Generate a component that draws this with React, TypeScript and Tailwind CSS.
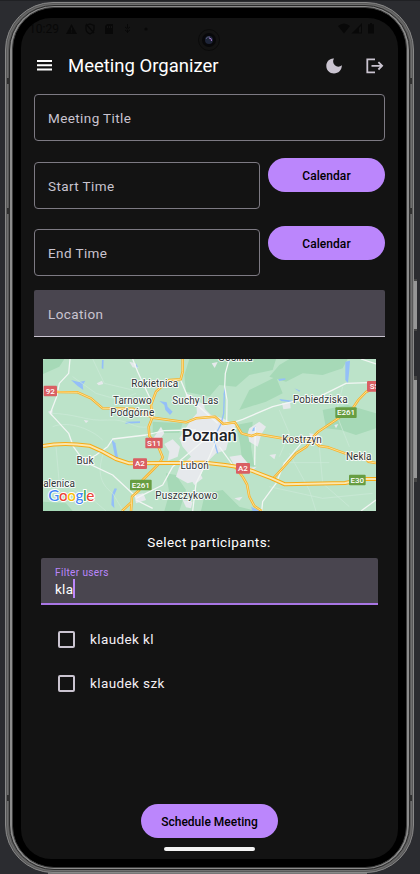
import React from "react";

const motorway = "M21 288 C60 280 110 280 160 287 L200 305 L240 327 L280 340 L507 338 L567 345 L602 350 L647 362 L707 385 L747 403 L927 399 L987 387 L1020 387";
const mainRoads = [
  "M45 124 L68 126 L125 127 L165 145 L200 175 L290 176 L350 203 L400 210 L450 217 L480 205 L537 200 L562 222 L597 217 L617 250 L647 258 L662 252 L737 265 L825 268 L850 288 L877 292 L927 310 L985 322 L997 335 L1020 339",
  "M440 27 L440 65 L434 88 L400 90 L360 125 L345 165 L350 200 L338 230 L340 258 L367 290 L380 322 L370 340 L350 360 L320 390 L310 420 L288 440 L285 483",
  "M285 458 L258 483",
  "M1020 112 L990 126 L967 150 L950 175 L907 205 L847 245 L830 262 L812 290 L780 310 L762 330 L735 360 L707 390",
  "M597 350 L620 380 L633 403 L640 440 L655 468 L677 483",
];
const minorRoads = [
  "M102 27 L98 70 L70 100 L62 140 L43 190 L98 250 L112 290 L145 335 L230 375 L300 440",
  "M145 335 L180 315 L215 290 L230 267 L330 255 L385 242 L480 240",
  "M290 27 L305 65 L340 140 L350 180",
  "M580 27 L568 70 L566 110 L573 150 L572 222",
  "M560 228 L620 208 L710 170 L770 155 L850 140 L930 100 L1020 97",
  "M658 230 L656 345",
  "M300 445 L380 405 L410 350 L470 300 L540 240",
  "M677 483 L680 455 L720 400 L745 340 L800 275 L840 260",
  "M434 90 L455 140 L500 180 L545 220",
  "M470 483 L480 400 L520 320 L550 250",
  "M300 450 L350 475",
  "M975 483 L1020 450",
  "M975 27 L1020 42",
  "M550 290 L590 345",
];
const trails = [
  "M40 190 C120 190 150 215 215 210 S290 240 340 230",
  "M110 80 L180 130 L250 150 L300 130",
  "M210 290 C180 360 190 400 230 430 L260 480",
  "M60 290 L70 400 L160 440 L210 483",
  "M760 310 L820 420 L840 483",
  "M700 410 L860 445 L1010 430",
  "M730 180 L760 250 L730 320",
  "M740 338 L880 338",
  "M850 290 L860 400 L940 470",
  "M920 110 L900 190 L940 290",
  "M170 27 L205 100 L290 120",
  "M50 230 C100 210 170 240 200 270",
];
const forests = [
  "M460 27 H720 L710 60 L640 75 L600 110 L550 105 L520 140 L450 125 L445 75 Z",
  "M760 27 H935 L920 55 L860 75 L800 70 L750 95 L700 80 L730 45 Z",
  "M860 180 L935 165 L1020 190 V235 L960 255 L915 240 L870 235 Z",
  "M600 225 L650 215 L645 290 L655 350 L620 345 L612 280 Z",
  "M350 215 L440 220 L430 248 L350 250 Z",
  "M507 430 L560 420 L610 470 L660 483 H495 Z",
  "M30 27 L85 27 L70 50 L21 72 V30 Z",
  "M640 120 L720 80 L740 130 L690 155 L610 180 Z",
  "M21 455 L90 460 L110 483 H21 Z",
  "M390 370 L420 375 L450 420 L430 483 H385 L400 430 Z",
];
const towns = [
  "M465 210 L500 170 L525 195 L560 205 L600 225 L580 262 L570 300 L540 310 L505 345 L490 390 L455 400 L420 380 L430 350 L465 320 L440 290 L430 265 Z",
  "M385 282 L410 268 L432 290 L425 320 L395 332 L400 305 Z",
  "M640 235 L670 215 L690 230 L675 255 L665 290 L640 275 L635 250 Z",
  "M580 320 L615 315 L640 345 L645 358 L600 355 Z",
  "M435 340 L470 330 L500 385 L475 405 Z",
  "M450 130 L472 140 L470 155 L448 150 Z",
  "M480 150 L505 165 L510 230 L485 220 Z",
  "M738 160 L762 156 L764 175 L742 178 Z",
  "M700 315 L720 312 L715 328 Z",
  "M280 35 L298 40 L308 55 L290 52 Z",
  "M182 100 L198 92 L202 102 L188 106 Z",
  "M143 210 L158 212 L150 219 Z",
  "M36 185 L50 180 L48 198 Z",
  "M130 325 L160 320 L158 348 L138 345 Z",
  "M295 435 L322 430 L330 450 L300 460 Z",
  "M350 268 L375 230 L385 250 L370 270 Z",
  "M527 40 L545 36 L536 54 Z",
  "M625 358 L662 350 L650 362 Z",
  "M595 445 L620 440 L610 452 Z",
  "M895 225 L907 222 L900 235 Z",
  "M820 250 L850 255 L855 285 L825 280 Z",
  "M440 450 L470 455 L465 475 L450 472 Z",
];
const lakes = [
  "M105 90 L128 96 L148 92 L140 105 L142 120 L125 108 Z",
  "M370 153 L392 157 L395 170 L410 185 L402 195 L388 180 L385 165 Z",
  "M226 266 L238 280 L246 322 L238 325 Z",
  "M928 35 L942 32 L940 60 L936 100 L928 90 Z",
  "M270 215 L312 214 V219 L268 221 Z",
  "M198 30 H203 L202 57 L197 55 Z",
  "M228 432 L236 415 L243 416 L233 440 L235 475 L226 465 Z",
  "M651 235 L659 229 L658 242 L648 244 Z",
  "M565 105 L568 128 L563 135 Z",
  "M727 87 L748 85 L748 89 L730 93 Z",
  "M730 147 L770 152 L768 157 L735 153 Z",
  "M645 470 L660 477 L672 483 H650 Z",
  "M300 40 L306 52 L301 54 Z",
  "M475 420 L487 435 L484 438 Z",
  "M775 115 L793 122 L790 125 Z",
];

const places: [string, number, number, number][] = [
  ["Rokietnica", 356, 110, 141],
  ["Tarnowo", 289, 162, 116],
  ["Podgórne", 289, 198, 132],
  ["Suchy Las", 478, 162, 138],
  ["Pobiedziska", 853, 158, 164],
  ["Kostrzyn", 798, 278, 119],
  ["Nekla", 968, 329, 76],
  ["Buk", 147, 342, 51],
  ["Luboń", 476, 357, 85],
  ["Puszczykowo", 451, 446, 186],
  ["alenica", 69, 412, 95],
  ["Goślina", 598, 33, 104],
];
const shields: [string, number, number, number, string][] = [
  ["92", 23, 107, 40, "#d95f63"],
  ["S11", 328, 263, 52, "#d95f63"],
  ["A2", 291, 325, 42, "#d95f63"],
  ["A2", 600, 339, 42, "#d95f63"],
  ["S5", 993, 93, 44, "#d95f63"],
  ["E261", 282, 389, 65, "#679d42"],
  ["E261", 898, 172, 64, "#679d42"],
  ["E30", 939, 374, 50, "#679d42"],
];

function PoznanMap() {
  return (
    <svg viewBox="21 27 999 456" className="block h-[152px] w-[333px]" fontFamily="Roboto, sans-serif">
      <rect x="21" y="27" width="999" height="456" fill="#bce3c9" />
      {forests.map((d) => <path key={d} d={d} fill="#a6d9b7" />)}
      {towns.map((d) => <path key={d} d={d} fill="#e6e9ec" />)}
      {lakes.map((d) => <path key={d} d={d} fill="#94bff8" />)}
      <path d="M545 310 L535 275 L543 245 L555 222 L563 190 L565 130" fill="none" stroke="#94bff8" strokeWidth="4" />
      <g fill="none" strokeLinejoin="round">
        {trails.map((d) => <path key={d} d={d} stroke="#cdeada" strokeWidth="2" />)}
        {minorRoads.map((d) => <path key={d} d={d} stroke="#f2f6f4" strokeWidth="3.8" />)}
        {mainRoads.map((d) => <path key={d} d={d} stroke="#f7b32a" strokeWidth="7.5" />)}
        {mainRoads.map((d) => <path key={d} d={d} stroke="#fde5a2" strokeWidth="2.5" />)}
        <path d={motorway} stroke="#f6ab16" strokeWidth="12" />
        <path d={motorway} stroke="#fce7ad" strokeWidth="6" />
      </g>
      {places.map(([name, x, y, w]) => (
        <text key={name} x={x} y={y} textLength={w} textAnchor="middle" fontSize="30" fill="#303437" stroke="#fff" strokeOpacity=".85" strokeWidth="6" strokeLinejoin="round" paintOrder="stroke">{name}</text>
      ))}
      <text x="520" y="273" textLength="165" textAnchor="middle" fontSize="50" fontWeight="500" fill="#202326" stroke="#fff" strokeOpacity=".85" strokeWidth="7" strokeLinejoin="round" paintOrder="stroke">Poznań</text>
      {shields.map(([name, x, y, w, fill]) => (
        <g key={name + x}>
          <rect x={x} y={y} width={w} height="32" rx="3" fill={fill} />
          <text x={x + w / 2} y={y + 24} textAnchor="middle" fontSize="24" fontWeight="500" fill="#fff">{name}</text>
        </g>
      ))}
      <text x="37" y="454" textLength="138" fontFamily="Lato, sans-serif" fontSize="46" fontWeight="500" strokeWidth="6" stroke="#fff" paintOrder="stroke">
        <tspan fill="#4285f4">G</tspan><tspan fill="#ea4335">o</tspan><tspan fill="#fbbc05">o</tspan><tspan fill="#4285f4">g</tspan><tspan fill="#34a853">l</tspan><tspan fill="#ea4335">e</tspan>
      </text>
    </svg>
  );
}

function OutlinedField({ label, wide }: { label: string; wide?: boolean }) {
  return (
    <div className={`${wide ? "w-[351px]" : "w-[226px]"} flex h-[47px] shrink-0 items-center rounded-[4px] border border-[#7d7a83] pl-[13px] pt-[2px] text-[13.5px] tracking-[0.4px] text-[#cac4d0]`}>
      {label}
    </div>
  );
}

function CalendarButton() {
  return <button className="h-[34px] w-[117px] rounded-full bg-[#bb86fc] pt-[1px] text-[12px] font-medium tracking-[0.05px] text-black">Calendar</button>;
}

function UserRow({ name }: { name: string }) {
  return (
    <label className="flex h-[44px] items-center pl-[37px] text-[13.5px] tracking-[0.4px] text-[#f4f0f5]">
      <span className="mr-[15px] size-[17px] rounded-[2px] border-2 border-[#cac4d0]" />
      <span>{name}</span>
    </label>
  );
}

function StatusBar() {
  return (
    <div className="flex h-[21px] shrink-0 items-center pl-[8px] text-[#080808]">
      <span className="w-[36px] text-[12px] leading-none">10:29</span>
      <svg className="ml-[1px] h-[12px] w-[84px]" viewBox="0 0 84 12" fill="currentColor">
        <path fillRule="evenodd" d="M5.5 1 L11 11 H0Z M5 4.5 h1 v3 h-1z M5 8.5 h1 v1 h-1z" />
        <path d="M24 1 L28 2.5 V6 C28 8 26.5 10 24 11 C21.5 10 20 8 20 6 V2.5Z M20 1 L28 10" fill="none" stroke="currentColor" strokeWidth="1.3" />
        <path fillRule="evenodd" d="M41 1 H47 V11 H39 V3Z M41 3 v2 h1 v-2z M43 3 v2 h1 v-2z M45 3 v2 h1 v-2z" />
        <path d="M61.5 1 V5 M59 4 L61.5 6 L64 4 M59 7 L61.5 9 L64 7 M61.5 7 V10" fill="none" stroke="currentColor" />
        <circle cx="80" cy="6" r="1.6" />
      </svg>
      <svg className="ml-auto mr-[23px] h-[11px] w-[37px]" viewBox="0 0 37 11" fill="currentColor">
        <path d="M0 3 Q6 -2 12 3 L6 10.5Z" />
        <path fillRule="evenodd" d="M24 0 V10.5 H13.5Z M21 5 V9.5 H23 V3Z" />
        <path d="M30 1.2 h2 V0 h2 v1.2 h2 V10.5 h-6z" />
      </svg>
    </div>
  );
}

function AppBar() {
  return (
    <header className="flex h-[54px] shrink-0 items-center pb-[1px] pl-[16px] pr-[14px]">
      <svg className="h-[11px] w-[15px]" viewBox="0 0 15 11" fill="#fff">
        <path d="M0 0h15v2H0zM0 4.2h15v2H0zM0 8.5h15v2H0z" />
      </svg>
      <h1 className="ml-[16px] pt-[1px] text-[18.5px] leading-6 text-white">Meeting Organizer</h1>
      <svg className="ml-auto h-[16px] w-[17px]" viewBox="0 0 17 16">
        <path d="M7.2 .5 C3 .8 .3 4 .3 8 C.3 12.3 3.7 15.5 8 15.5 C12.4 15.5 15.7 12.3 15.9 7.3 C13.7 9.2 10.7 9 8.9 7.3 C7 5.5 6.5 2.7 8 .5Z" fill="#cac4d0" />
      </svg>
      <svg className="ml-[23px] h-[16px] w-[18px]" viewBox="0 0 18 16" fill="none" stroke="#cac4d0" strokeWidth="1.8">
        <path d="M9 1.3 H1.3 V14.3 H9 M5.5 7.8 H16 M12.4 4.1 L16.1 7.8 L12.4 11.5" />
      </svg>
    </header>
  );
}

export default function App() {
  return (
    <div className="relative h-[874px] w-[420px] overflow-hidden bg-[#2b2c30] px-[5px] pt-[2px] font-['Roboto',sans-serif]">
      <div className="absolute left-0 top-0 h-[1px] w-full bg-[#202124]" />
      <div className="absolute bottom-0 left-[48px] h-[2px] w-[319px] bg-[#777]" />
      <div className="absolute left-[413px] top-[279px] h-[52px] w-[4px] border-b-2 border-t-2 border-[#444] bg-[#969696]" />
      <div className="absolute left-[413px] top-[376px] h-[106px] w-[4px] border-b-4 border-t-4 border-[#444] bg-[#969696]" />
      <div className="relative h-[871px] w-[409px] rounded-[48px] border border-[#898989] bg-[#595959] p-[1px]">
        <div className="absolute left-[1px] top-[75px] h-[6px] w-[3px] bg-[#303030]" />
        <div className="absolute right-[1px] top-[75px] h-[6px] w-[3px] bg-[#303030]" />
        <div className="absolute left-[1px] top-[205px] h-[6px] w-[3px] bg-[#303030]" />
        <div className="absolute right-[1px] top-[205px] h-[6px] w-[3px] bg-[#303030]" />
        <div className="absolute left-[1px] top-[792px] h-[6px] w-[3px] bg-[#303030]" />
        <div className="absolute right-[1px] top-[792px] h-[6px] w-[3px] bg-[#303030]" />
        <div className="h-full rounded-[46px] border border-[#6f6f6f] px-[1px]">
          <div className="h-full rounded-[45px] border border-[#2b2b2b] bg-[#8b8b8b] px-[2px] py-[1px]">
            <div className="h-full rounded-[42px] border border-[#3c3c3c] bg-black px-[8px] pb-[9px] pt-[10px]">
              <main className="mx-auto flex h-[841px] w-[377px] flex-col overflow-hidden rounded-[30px] bg-[#131313]">
                <StatusBar />
                <AppBar />
                <div className="mt-[1px] px-[13px]">
                  <OutlinedField label="Meeting Title" wide />
                  <div className="mt-[17px] flex h-[51px] justify-between">
                    <div className="pt-[4px]"><OutlinedField label="Start Time" /></div>
                    <CalendarButton />
                  </div>
                  <div className="mt-[17px] flex h-[50px] justify-between">
                    <div className="pt-[3px]"><OutlinedField label="End Time" /></div>
                    <CalendarButton />
                  </div>
                  <div className="mt-[14px] flex h-[47px] items-center rounded-t-[2px] border-b border-[#cac4d0] bg-[#49454f] pl-[14px] pt-[2px] text-[13.5px] tracking-[0.4px] text-[#cac4d0]">Location</div>
                </div>
                <div className="ml-[22px] mt-[22px] h-[152px] w-[333px]"><PoznanMap /></div>
                <p className="mt-[21px] h-[20px] pr-[1px] text-center text-[13.5px] leading-5 tracking-[0.4px] text-white">Select participants:</p>
                <div className="mx-[20px] mt-[6px] h-[47px] shrink-0 rounded-t-[2px] border-b-2 border-[#a976e5] bg-[#49454f] pl-[14px] pt-[8px]">
                  <div className="h-[13px] text-[10.1px] leading-[13px] tracking-[0.33px] text-[#bb86fc]">Filter users</div>
                  <div className="flex h-[19px] items-center text-[13.5px] tracking-[0.25px] text-white"><span className="pt-[1px]">kla</span><span className="h-[19px] w-[2px] bg-[#bb86fc]" /></div>
                </div>
                <div className="mt-[12px]">
                  <UserRow name="klaudek kl" />
                  <UserRow name="klaudek szk" />
                </div>
                <button className="mb-[9px] ml-[120px] mt-auto h-[34px] w-[137px] shrink-0 rounded-full bg-[#bb86fc] pt-[2px] text-[12px] font-medium tracking-[0.02px] text-black">Schedule Meeting</button>
                <div className="mb-[8px] ml-[143px] h-[4px] w-[91px] shrink-0 rounded-full bg-[#f4f4f4]" />
              </main>
            </div>
          </div>
        </div>
      </div>
      <div className="absolute left-[198px] top-[29px] flex size-[22px] items-center justify-center rounded-full border border-[#0b0b0b] bg-[#131313]">
        <div className="flex size-[14px] items-center justify-center rounded-full bg-[#08080a]">
          <svg className="size-[8px]" viewBox="0 0 8 8">
            <circle cx="4" cy="4" r="4" fill="#1e2539" />
            <path d="M1 3 Q2 0 5 1" stroke="#565b79" fill="none" />
            <path d="M4 2 Q7 2 6.5 5" stroke="#a178c7" fill="none" />
          </svg>
        </div>
      </div>
    </div>
  );
}
